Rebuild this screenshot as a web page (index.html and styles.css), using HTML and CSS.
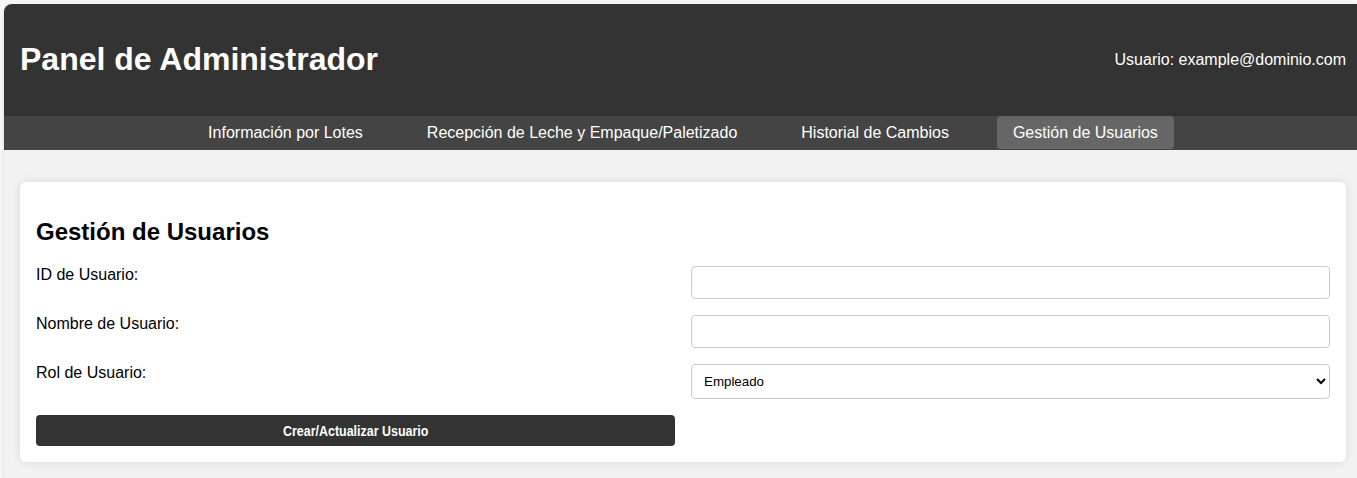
FILE: index.html
```html
<!DOCTYPE html>
<html lang="es">
<head>
<meta charset="utf-8">
<title>Panel de Administrador</title>
<link rel="stylesheet" href="styles.css">
</head>
<body>
<div class="app">
  <header class="topbar">
    <h1 class="title">Panel de Administrador</h1>
    <div class="user">Usuario: example@dominio.com</div>
  </header>
  <nav class="nav">
    <a class="nav-item">Información por Lotes</a>
    <a class="nav-item">Recepción de Leche y Empaque/Paletizado</a>
    <a class="nav-item">Historial de Cambios</a>
    <a class="nav-item active">Gestión de Usuarios</a>
  </nav>
  <main class="main">
    <section class="card">
      <h2 class="card-title">Gestión de Usuarios</h2>
      <form class="form">
        <label class="label" for="uid">ID de Usuario:</label>
        <input class="field" id="uid" type="text">
        <label class="label" for="uname">Nombre de Usuario:</label>
        <input class="field" id="uname" type="text">
        <label class="label" for="urole">Rol de Usuario:</label>
        <select class="field select" id="urole">
          <option>Empleado</option>
          <option>Administrador</option>
        </select>
        <button class="btn" type="button"><span class="btn-text">Crear/Actualizar Usuario</span></button>
      </form>
    </section>
  </main>
</div>
</body>
</html>
```
FILE: styles.css
```css
* { box-sizing: border-box; }
html, body { margin: 0; padding: 0; }
body {
  background: #f6f6f6;
  font-family: "Liberation Sans", Arial, sans-serif;
  color: #000;
  padding: 4px 0 0 4px;
  height: 478px;
  overflow: hidden;
}
.app {
  background: #f2f2f2;
  border-top-left-radius: 8px;
  overflow: hidden;
  box-shadow: -1px 0 2px rgba(0,0,0,0.08);
  min-height: 474px;
}
.topbar {
  background: #333;
  color: #fff;
  height: 112px;
  display: flex;
  align-items: center;
  justify-content: space-between;
  padding: 0 11px 0 16px;
}
.title {
  margin: 0;
  font-size: 32px;
  font-weight: bold;
  position: relative;
  top: -1px;
}
.user {
  font-size: 16px;
}
.nav {
  background: #444;
  display: flex;
  justify-content: center;
  padding-left: 5px;
  height: 34px;
}
.nav-item {
  color: #fff;
  font-size: 16px;
  padding: 8px 16px 7px;
  margin: 0 16px;
  height: 33px;
  border-radius: 4px;
  text-decoration: none;
  white-space: nowrap;
}
.nav-item.active {
  background: #666;
}
.main {
  padding: 32px 11px 16px 16px;
}
.card {
  background: #fff;
  border-radius: 6px;
  box-shadow: 0 0 10px rgba(0,0,0,0.1);
  padding: 16px;
}
.card-title {
  font-size: 24px;
  font-weight: bold;
  margin: 20px 0 20px;
}
.form {
  display: grid;
  grid-template-columns: 1fr 1fr;
  column-gap: 16px;
  row-gap: 16px;
}
.label {
  font-size: 16px;
  line-height: 18px;
}
.field {
  font-family: "Liberation Sans", Arial, sans-serif;
  font-size: 13.33px;
  padding: 8px;
  border: 1px solid #ccc;
  border-radius: 4px;
  height: 33px;
  background: #fff;
}
.select {
  height: 35px;
  padding: 8px 4px 8px 8px;
  color: #000;
}
.btn {
  grid-column: 1;
  background: #333;
  color: #fff;
  border: none;
  border-radius: 4px;
  height: 31px;
  padding: 0 8px;
  font-family: "Liberation Sans", Arial, sans-serif;
  font-size: 14px;
  font-weight: bold;
}
.btn-text {
  display: inline-block;
  transform: scaleX(0.89);
}
```
